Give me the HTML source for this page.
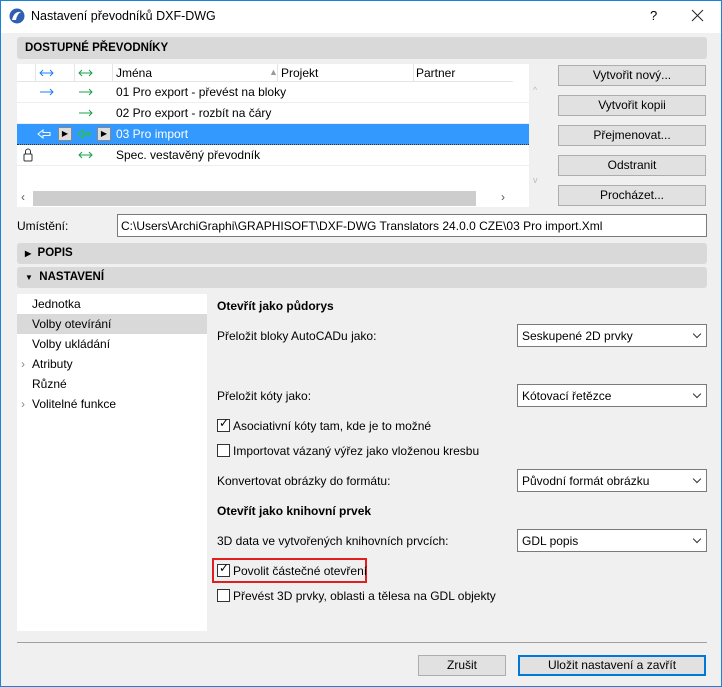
<!DOCTYPE html><html><head><meta charset="utf-8"><style>
*{box-sizing:border-box}
body{margin:0;width:722px;height:687px;overflow:hidden;font-family:"Liberation Sans",sans-serif;font-size:12px;color:#000}
#w{position:absolute;left:0;top:0;width:722px;height:687px;background:#f0f0f0;border:1px solid #1883d7}
.a{position:absolute;white-space:nowrap}
.bar{position:absolute;left:16px;width:690px;background:#d9d9d9;border-radius:3px;font-weight:bold;font-size:11.5px;padding-left:8px}
.btn{position:absolute;background:#e1e1e1;border:1px solid #adadad;text-align:center;line-height:18px}
.dd{position:absolute;left:516px;width:190px;height:23px;background:#fff;border:1px solid #7a7a7a;padding:4px 4px;font-size:12px}
.dd:after{content:"";position:absolute;right:6px;top:6px;width:5px;height:5px;border-right:1px solid #333;border-bottom:1px solid #333;transform:rotate(45deg)}
.cb{position:absolute;width:13px;height:13px;border:1px solid #333;background:#fff}
.row{position:absolute;left:16px;width:512px;height:21px;border-bottom:1px solid #eee}
svg.a{overflow:visible}
</style></head><body><div id="w">
<div class="a" style="left:0;top:0;width:720px;height:32px;background:#fff"></div>
<svg class="a" style="left:8px;top:7px" width="16" height="16"><circle cx="8" cy="8" r="7.5" fill="#2f5fb0"/><path d="M3 12 Q5 3 12 4 Q8 6 7 12Z" fill="#fff"/></svg>
<div class="a" style="left:30px;top:8px;font-size:12.5px">Nastavení převodníků DXF-DWG</div>
<div class="a" style="left:649px;top:7px;font-size:13px">?</div>
<svg class="a" style="left:691px;top:9px" width="12" height="12"><path d="M0 0L11 11M11 0L0 11" stroke="#222" stroke-width="1"/></svg>
<div class="bar" style="top:36px;height:22px;line-height:22px">DOSTUPNÉ PŘEVODNÍKY</div>
<div class="a" style="left:16px;top:63px;width:512px;height:143px;background:#fff"></div>
<div class="a" style="left:16px;top:63px;width:496px;height:18px;border-bottom:1px solid #e5e5e5"></div>
<div class="a" style="left:34px;top:63px;width:1px;height:18px;background:#e5e5e5"></div>
<div class="a" style="left:73px;top:63px;width:1px;height:18px;background:#e5e5e5"></div>
<div class="a" style="left:111px;top:63px;width:1px;height:18px;background:#e5e5e5"></div>
<div class="a" style="left:276px;top:63px;width:1px;height:18px;background:#e5e5e5"></div>
<div class="a" style="left:412px;top:63px;width:1px;height:18px;background:#e5e5e5"></div>
<svg class="a" style="left:39px;top:72px" width="13" height="1"><path d="M0 0H13M3 -3L0 0L3 3M10 -3L13 0L10 3" stroke="#1e7ff0" fill="none"/></svg>
<svg class="a" style="left:78px;top:72px" width="13" height="1"><path d="M0 0H13M3 -3L0 0L3 3M10 -3L13 0L10 3" stroke="#1aa04a" fill="none"/></svg>
<div class="a" style="left:115px;top:65px">Jména</div><div class="a" style="left:268px;top:66px;color:#999;font-size:9px">▲</div>
<div class="a" style="left:280px;top:65px">Projekt</div><div class="a" style="left:415px;top:65px">Partner</div>
<div class="row" style="top:81px"></div>
<svg class="a" style="left:39px;top:91px" width="13" height="1"><path d="M0 0H13M10 -3L13 0L10 3" stroke="#1e7ff0" fill="none"/></svg>
<svg class="a" style="left:78px;top:91px" width="13" height="1"><path d="M0 0H13M10 -3L13 0L10 3" stroke="#1aa04a" fill="none"/></svg>
<div class="a" style="left:115px;top:84px">01 Pro export - převést na bloky</div>
<div class="row" style="top:102px"></div>
<svg class="a" style="left:78px;top:112px" width="13" height="1"><path d="M0 0H13M10 -3L13 0L10 3" stroke="#1aa04a" fill="none"/></svg>
<div class="a" style="left:115px;top:105px">02 Pro export - rozbít na čáry</div>
<div class="a" style="left:16px;top:123px;width:512px;height:21px;background:#3399ff;border-bottom:1px dotted #333"></div>
<svg class="a" style="left:36px;top:128px" width="14" height="10"><path d="M1 5L6 1V3.5H13V6.5H6V9Z" fill="none" stroke="#fff"/></svg>
<div class="a" style="left:57px;top:126px;width:14px;height:14px;background:#ddd;border:1px solid #888;font-size:8px;text-align:center;line-height:12px">▶</div>
<svg class="a" style="left:76px;top:128px" width="14" height="10"><path d="M1 5L6 1V3.5H13V6.5H6V9Z" fill="none" stroke="#2c2"/></svg>
<div class="a" style="left:96px;top:126px;width:14px;height:14px;background:#ddd;border:1px solid #888;font-size:8px;text-align:center;line-height:12px">▶</div>
<div class="a" style="left:115px;top:126px;color:#fff">03 Pro import</div>
<div class="row" style="top:144px"></div>
<svg class="a" style="left:22px;top:147px" width="10" height="14"><path d="M2.5 6V3.5A2.5 2.5 0 0 1 7.5 3.5V6" stroke="#333" fill="none"/><rect x="1" y="6" width="8" height="7" rx="1" stroke="#333" fill="none"/></svg>
<svg class="a" style="left:78px;top:154px" width="13" height="1"><path d="M0 0H13M3 -3L0 0L3 3M10 -3L13 0L10 3" stroke="#1aa04a" fill="none"/></svg>
<div class="a" style="left:115px;top:147px">Spec. vestavěný převodník</div>
<div class="a" style="left:32px;top:190px;width:443px;height:15px;background:#cdcdcd"></div>
<div class="a" style="left:20px;top:189px;color:#555">‹</div><div class="a" style="left:500px;top:189px;color:#555">›</div>
<div class="a" style="left:532px;top:84px;color:#bbb;font-size:9px">^</div><div class="a" style="left:532px;top:174px;color:#bbb;font-size:9px">v</div>
<div class="btn" style="left:557px;top:64px;width:148px;height:21px">Vytvořit nový...</div>
<div class="btn" style="left:557px;top:94px;width:148px;height:21px">Vytvořit kopii</div>
<div class="btn" style="left:557px;top:124px;width:148px;height:21px">Přejmenovat...</div>
<div class="btn" style="left:557px;top:154px;width:148px;height:21px">Odstranit</div>
<div class="btn" style="left:557px;top:184px;width:148px;height:21px">Procházet...</div>
<div class="a" style="left:16px;top:218px">Umístění:</div>
<div class="a" style="left:116px;top:213px;width:590px;height:23px;background:#fff;border:1px solid #7a7a7a;padding:4px 3px">C:\Users\ArchiGraphi\GRAPHISOFT\DXF-DWG Translators 24.0.0 CZE\03 Pro import.Xml</div>
<div class="bar" style="top:242px;height:21px;line-height:21px"><span style="font-size:8px">▶</span>&nbsp; POPIS</div>
<div class="bar" style="top:266px;height:21px;line-height:21px"><span style="font-size:8px">▼</span>&nbsp; NASTAVENÍ</div>
<div class="a" style="left:16px;top:293px;width:190px;height:337px;background:#fff"></div>
<div class="a" style="left:16px;top:313px;width:190px;height:20px;background:#d9d9d9"></div>
<div class="a" style="left:31px;top:296px">Jednotka</div>
<div class="a" style="left:31px;top:316px">Volby otevírání</div>
<div class="a" style="left:31px;top:336px">Volby ukládání</div>
<div class="a" style="left:20px;top:356px;color:#888">›</div><div class="a" style="left:31px;top:356px">Atributy</div>
<div class="a" style="left:31px;top:376px">Různé</div>
<div class="a" style="left:20px;top:396px;color:#888">›</div><div class="a" style="left:31px;top:396px">Volitelné funkce</div>
<div class="a" style="left:216px;top:298px;font-weight:bold">Otevřít jako půdorys</div>
<div class="a" style="left:216px;top:328px">Přeložit bloky AutoCADu jako:</div><div class="dd" style="top:323px">Seskupené 2D prvky</div>
<div class="a" style="left:216px;top:388px">Přeložit kóty jako:</div><div class="dd" style="top:383px">Kótovací řetězce</div>
<div class="cb" style="left:216px;top:418px"></div><div class="a" style="left:218px;top:415px;font-size:12px">✓</div><div class="a" style="left:232px;top:418px">Asociativní kóty tam, kde je to možné</div>
<div class="cb" style="left:216px;top:443px"></div><div class="a" style="left:232px;top:443px">Importovat vázaný výřez jako vloženou kresbu</div>
<div class="a" style="left:216px;top:473px">Konvertovat obrázky do formátu:</div><div class="dd" style="top:468px">Původní formát obrázku</div>
<div class="a" style="left:216px;top:503px;font-weight:bold">Otevřít jako knihovní prvek</div>
<div class="a" style="left:216px;top:533px">3D data ve vytvořených knihovních prvcích:</div><div class="dd" style="top:528px">GDL popis</div>
<div class="a" style="left:211px;top:557px;width:155px;height:25px;border:2px solid #e02020"></div>
<div class="cb" style="left:216px;top:563px"></div><div class="a" style="left:218px;top:560px">✓</div><div class="a" style="left:232px;top:563px">Povolit částečné otevření</div>
<div class="cb" style="left:216px;top:588px"></div><div class="a" style="left:232px;top:588px">Převést 3D prvky, oblasti a tělesa na GDL objekty</div>
<div class="a" style="left:16px;top:641px;width:690px;height:1px;background:#a0a0a0"></div>
<div class="btn" style="left:417px;top:654px;width:88px;height:21px">Zrušit</div>
<div class="btn" style="left:517px;top:654px;width:188px;height:21px;border:2px solid #0078d7;line-height:17px">Uložit nastavení a zavřít</div>
</div></body></html>
